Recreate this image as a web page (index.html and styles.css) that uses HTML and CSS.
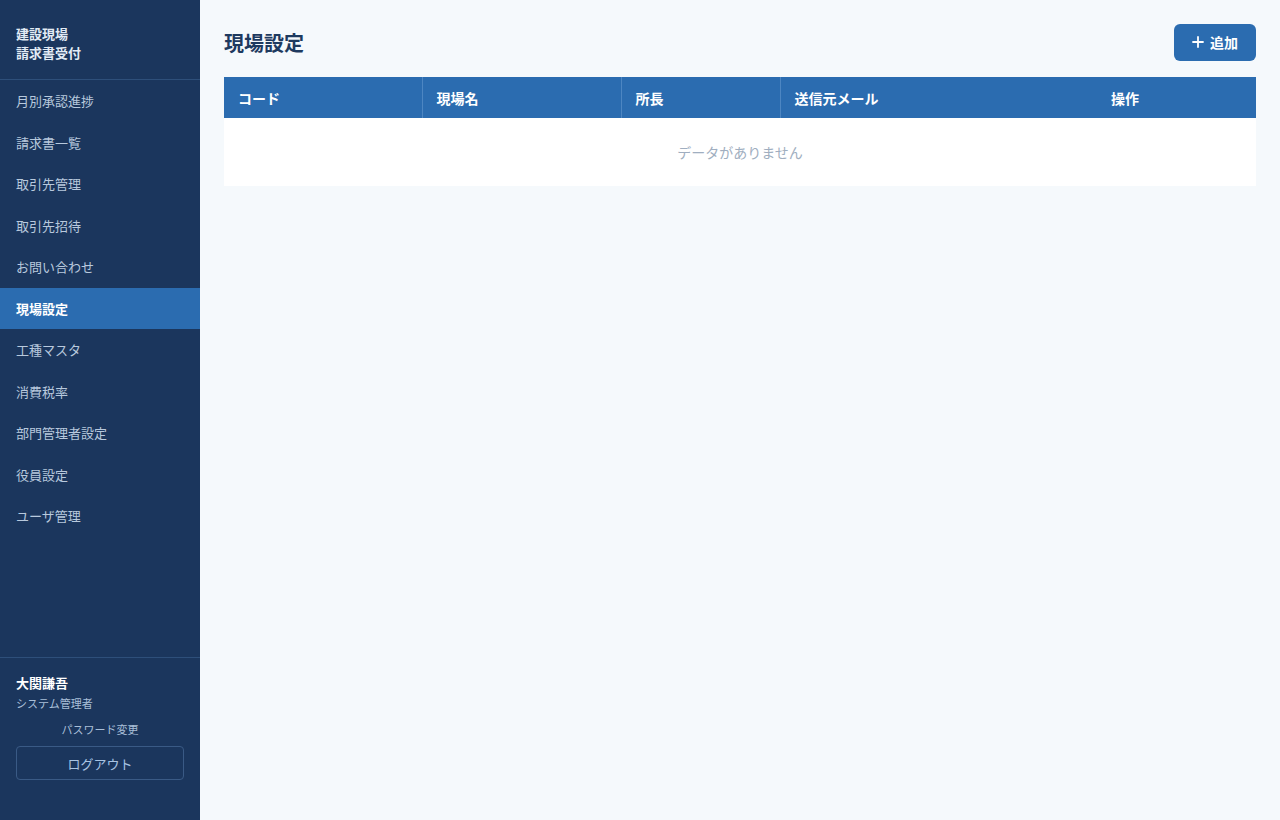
FILE: index.html
```html
<!DOCTYPE html>
<html lang="ja">
<head>
  <meta charset="UTF-8">
  <meta name="viewport" content="width=device-width, initial-scale=1.0">
  <title>現場設定 - 建設現場 請求書受付</title>
  <link rel="stylesheet" href="styles.css">
</head>
<body>
  <div class="layout">
    <aside class="sidebar">
      <div class="brand">建設現場<br>請求書受付</div>
      <nav class="nav">
        <a class="nav-item" href="#">月別承認進捗</a>
        <a class="nav-item" href="#">請求書一覧</a>
        <a class="nav-item" href="#">取引先管理</a>
        <a class="nav-item" href="#">取引先招待</a>
        <a class="nav-item" href="#">お問い合わせ</a>
        <a class="nav-item active" href="#">現場設定</a>
        <a class="nav-item" href="#">工種マスタ</a>
        <a class="nav-item" href="#">消費税率</a>
        <a class="nav-item" href="#">部門管理者設定</a>
        <a class="nav-item" href="#">役員設定</a>
        <a class="nav-item" href="#">ユーザ管理</a>
      </nav>
      <div class="user-box">
        <div class="user-name">大関謙吾</div>
        <div class="user-role">システム管理者</div>
        <a class="password-link" href="#">パスワード変更</a>
        <button class="logout-btn">ログアウト</button>
      </div>
    </aside>

    <main class="main">
      <div class="page-header">
        <h1>現場設定</h1>
        <button class="add-btn">
          <svg width="12" height="12" viewBox="0 0 12 12"><path d="M6 1v10M1 6h10" stroke="currentColor" stroke-width="1.8" stroke-linecap="round"/></svg>
          追加
        </button>
      </div>

      <table class="data-table">
        <thead>
          <tr>
            <th class="col-code">コード</th>
            <th class="col-name">現場名</th>
            <th class="col-chief">所長</th>
            <th class="col-mail">送信元メール</th>
            <th class="col-ops">操作</th>
          </tr>
        </thead>
        <tbody>
          <tr>
            <td colspan="5" class="empty">データがありません</td>
          </tr>
        </tbody>
      </table>
    </main>
  </div>
</body>
</html>
```

FILE: styles.css
```css
* {
  box-sizing: border-box;
}
body {
  margin: 0;
  font-family: "Noto Sans CJK JP", "Noto Sans", sans-serif;
  background-color: #f5f9fc;
  color: #1e3a5f;
}
.layout {
  display: flex;
  min-height: 820px;
}
.sidebar {
  width: 200px;
  flex-shrink: 0;
  background-color: #1b365d;
  display: flex;
  flex-direction: column;
}
.brand {
  color: #e2ebf5;
  font-size: 13px;
  font-weight: bold;
  line-height: 19px;
  padding: 24px 16px 17px;
  border-bottom: 1px solid #2e4f7a;
}
.nav {
  display: flex;
  flex-direction: column;
  flex: 1;
}
.nav-item {
  display: block;
  color: #b8c9dd;
  font-size: 13px;
  line-height: 17.5px;
  padding: 12px 16px;
  text-decoration: none;
}
.nav-item.active {
  background-color: #2b6cb0;
  color: #fff;
  font-weight: bold;
}
.user-box {
  border-top: 1px solid #2e4f7a;
  padding: 15px 16px 40px;
  display: flex;
  flex-direction: column;
}
.user-name {
  color: #fff;
  font-size: 13px;
  font-weight: bold;
  line-height: 20px;
}
.user-role {
  color: #a9bfd8;
  font-size: 11px;
  line-height: 16px;
  margin-top: 2px;
}
.password-link {
  color: #a9bfd8;
  font-size: 11px;
  text-align: center;
  text-decoration: none;
  margin-top: 10px;
  line-height: 16px;
}
.logout-btn {
  margin-top: 9px;
  height: 34px;
  background: transparent;
  border: 1px solid #3a5a85;
  border-radius: 4px;
  color: #a9c4e3;
  font-family: inherit;
  font-size: 13px;
}
.main {
  flex: 1;
  padding: 24px;
}
.page-header {
  display: flex;
  justify-content: space-between;
  align-items: center;
  margin-bottom: 16px;
}
.page-header h1 {
  margin: 0;
  font-size: 20px;
  font-weight: bold;
  color: #1e3a5f;
}
.add-btn {
  display: flex;
  align-items: center;
  gap: 6px;
  height: 37px;
  padding: 0 18px 1px;
  background-color: #2b6cb0;
  color: #fff;
  border: none;
  border-radius: 6px;
  font-family: inherit;
  font-size: 14px;
  font-weight: bold;
}
.data-table {
  width: 100%;
  border-collapse: collapse;
  background-color: #fff;
  table-layout: fixed;
}
.data-table th {
  background-color: #2b6cb0;
  color: #fff;
  font-size: 14px;
  font-weight: bold;
  text-align: left;
  height: 41px;
  padding: 0 14px;
}
.col-code, .col-name, .col-chief {
  border-right: 1px solid #4d86c2;
}
.col-code { width: 198px; }
.col-name { width: 199px; }
.col-chief { width: 159px; }
.col-mail { width: 317px; }
.empty {
  height: 68px;
  padding-bottom: 2px;
  text-align: center;
  color: #a0aec0;
  font-size: 14px;
}
```
